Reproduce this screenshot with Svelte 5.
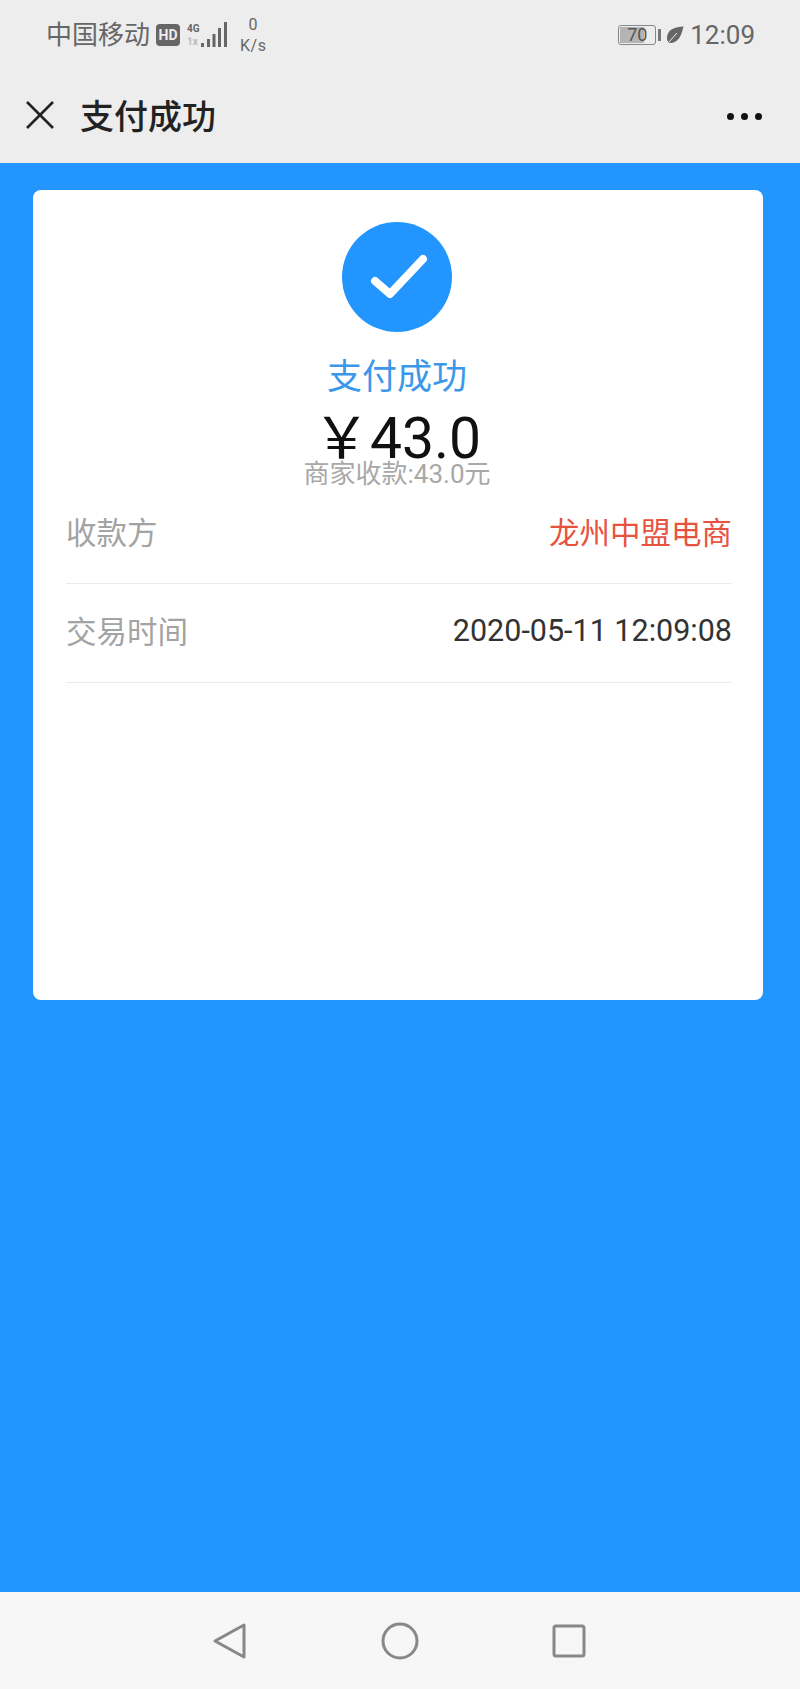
<script>
  const rows = [
    { label: "收款方", value: "龙州中盟电商", tone: "payee" },
    { label: "交易时间", value: "2020-05-11 12:09:08", tone: "" },
  ];
</script>

<main class="phone">
  <header class="top">
    <div class="status">
      <div class="status-left">
        <span class="carrier">中国移动</span>
        <span class="hd">HD</span>
        <svg class="signal" width="41" height="26" viewBox="0 0 41 26">
          <text x="0" y="10" class="net">4G</text>
          <text x="0" y="23" class="net faded">1x</text>
          <rect x="14" y="21" width="3" height="4" fill="#666" />
          <rect x="20" y="17" width="3" height="8" fill="#666" />
          <rect x="25.500" y="12" width="3" height="13" fill="#666" />
          <rect x="31" y="6" width="3" height="19" fill="#666" />
          <rect x="37" y="0" width="3" height="25" fill="#666" />
        </svg>
        <span class="speed"><span>0</span><span>K/s</span></span>
      </div>
      <div class="status-right">
        <span class="battery">
          <span class="level"></span>
          <span class="pct">70</span>
        </span>
        <span class="nub"></span>
        <svg class="leaf" width="18" height="18" viewBox="0 0 18 18">
          <path d="M17.500 .5C9 1 2 3 1 11c-.2 2 .4 4 1.500 5.500C4 17.500 8 17 11 14.500c3.500-3 5-8 6.500-14z" fill="#666" />
          <path d="M2.500 16.500L11 7" stroke="#ededed" stroke-width="1" fill="none" />
        </svg>
        <span class="clock">12:09</span>
      </div>
    </div>
    <nav class="titlebar">
      <svg class="close" width="30" height="30" viewBox="0 0 30 30">
        <path d="M2 2L28 28M28 2L2 28" stroke="#222" stroke-width="2.600" fill="none" />
      </svg>
      <h1>支付成功</h1>
      <div class="more"><i></i><i></i><i></i></div>
    </nav>
  </header>

  <section class="content">
    <div class="card">
      <div class="result">
        <svg class="check" width="110" height="110" viewBox="0 0 110 110">
          <circle cx="55" cy="55" r="55" fill="#2395ff" />
          <path d="M33 59L48 72L81 37" stroke="#fff" stroke-width="8" stroke-linecap="round" stroke-linejoin="round" fill="none" />
        </svg>
        <div class="state">支付成功</div>
        <div class="amount">￥43.0</div>
        <div class="merchant">商家收款:43.0元</div>
      </div>
      <div class="rows">
        {#each rows as row}
          <div class="row">
            <span class="label">{row.label}</span>
            <span class="value {row.tone}">{row.value}</span>
          </div>
        {/each}
      </div>
    </div>
  </section>

  <footer class="navbar">
    <svg width="36" height="38" viewBox="0 0 36 38">
      <path d="M32 3L3 19L32 35Z" stroke="#888" stroke-width="3" stroke-linejoin="round" fill="none" />
    </svg>
    <svg width="38" height="38" viewBox="0 0 38 38">
      <circle cx="19" cy="19" r="17" stroke="#888" stroke-width="3" fill="none" />
    </svg>
    <svg width="34" height="34" viewBox="0 0 34 34">
      <rect x="2" y="2" width="30" height="30" rx="2" stroke="#888" stroke-width="3" fill="none" />
    </svg>
  </footer>
</main>

<style>
  :global(body) {
    margin: 0;
  }

  .phone {
    width: 800px;
    height: 1689px;
    display: flex;
    flex-direction: column;
    background: #2395ff;
    font-family: Roboto, "Noto Sans CJK SC", sans-serif;
  }

  .top {
    height: 163px;
    background: #ededed;
    flex: none;
  }

  .status {
    height: 70px;
    display: flex;
    justify-content: space-between;
    align-items: center;
    padding: 0 45px 0 46px;
  }

  .status-left,
  .status-right {
    display: flex;
    align-items: center;
  }

  .carrier {
    font-size: 26px;
    color: #666;
    line-height: 30px;
  }

  .hd {
    margin-left: 6px;
    width: 24px;
    height: 22px;
    border-radius: 4px;
    background: #666;
    color: #ededed;
    font-size: 14px;
    font-weight: 700;
    line-height: 22px;
    text-align: center;
  }

  .signal {
    margin-left: 7px;
  }

  .net {
    font-size: 10px;
    font-weight: 700;
    fill: #666;
  }

  .faded {
    fill: #bbb;
  }

  .speed {
    margin-left: 12px;
    display: flex;
    flex-direction: column;
    align-items: center;
    font-size: 16px;
    line-height: 21px;
    color: #666;
    letter-spacing: 0.5px;
  }

  .battery {
    position: relative;
    width: 36px;
    height: 18px;
    border: 1.500px solid #888;
    border-radius: 3px;
    display: block;
  }

  .level {
    position: absolute;
    left: 1px;
    top: 1px;
    bottom: 1px;
    width: 24px;
    background: #b4b4b4;
  }

  .pct {
    position: absolute;
    inset: 0;
    font-size: 18px;
    line-height: 18px;
    text-align: center;
    color: #555;
  }

  .nub {
    width: 3px;
    height: 12px;
    margin-left: 2px;
    background: #777;
  }

  .leaf {
    margin-left: 5px;
  }

  .clock {
    margin-left: 6px;
    font-size: 26px;
    color: #666;
  }

  .titlebar {
    height: 93px;
    display: flex;
    align-items: center;
    padding: 0 38px 4px 25px;
    box-sizing: border-box;
  }

  .titlebar h1 {
    margin: 0 0 0 25px;
    font-size: 34px;
    font-weight: 500;
    color: #222;
    flex: 1;
  }

  .more {
    display: flex;
    gap: 7px;
    margin-top: 3px;
  }

  .more i {
    width: 7px;
    height: 7px;
    border-radius: 50%;
    background: #111;
  }

  .content {
    flex: 1;
    padding: 27px 37px 0 33px;
  }

  .card {
    height: 810px;
    background: #fff;
    border-radius: 8px;
    padding: 32px 31px 0 33px;
    box-sizing: border-box;
  }

  .result {
    display: flex;
    flex-direction: column;
    align-items: center;
    height: 263px;
    padding-right: 4px;
  }

  .check {
    flex: none;
  }

  .state {
    flex: none;
    margin-top: 24px;
    font-size: 35px;
    line-height: 44px;
    color: #3a97ea;
  }

  .amount {
    flex: none;
    margin-top: 6px;
    font-size: 57px;
    line-height: 66px;
    color: #111;
  }

  .merchant {
    flex: none;
    margin-top: -15px;
    font-size: 26px;
    line-height: 34px;
    color: #a8a8a8;
    white-space: nowrap;
  }

  .row {
    height: 99px;
    display: flex;
    justify-content: space-between;
    align-items: center;
    padding-bottom: 6px;
    border-bottom: 1px solid #ebebeb;
    box-sizing: border-box;
  }

  .label {
    font-size: 30.500px;
    color: #a3a3a3;
  }

  .value {
    font-size: 30.500px;
    color: #333;
  }

  .payee {
    color: #e8533f;
  }

  .navbar {
    height: 97px;
    flex: none;
    background: #f7f7f7;
    display: flex;
    align-items: center;
    justify-content: space-between;
    padding: 0 214px 0 212px;
    box-sizing: border-box;
  }
</style>
